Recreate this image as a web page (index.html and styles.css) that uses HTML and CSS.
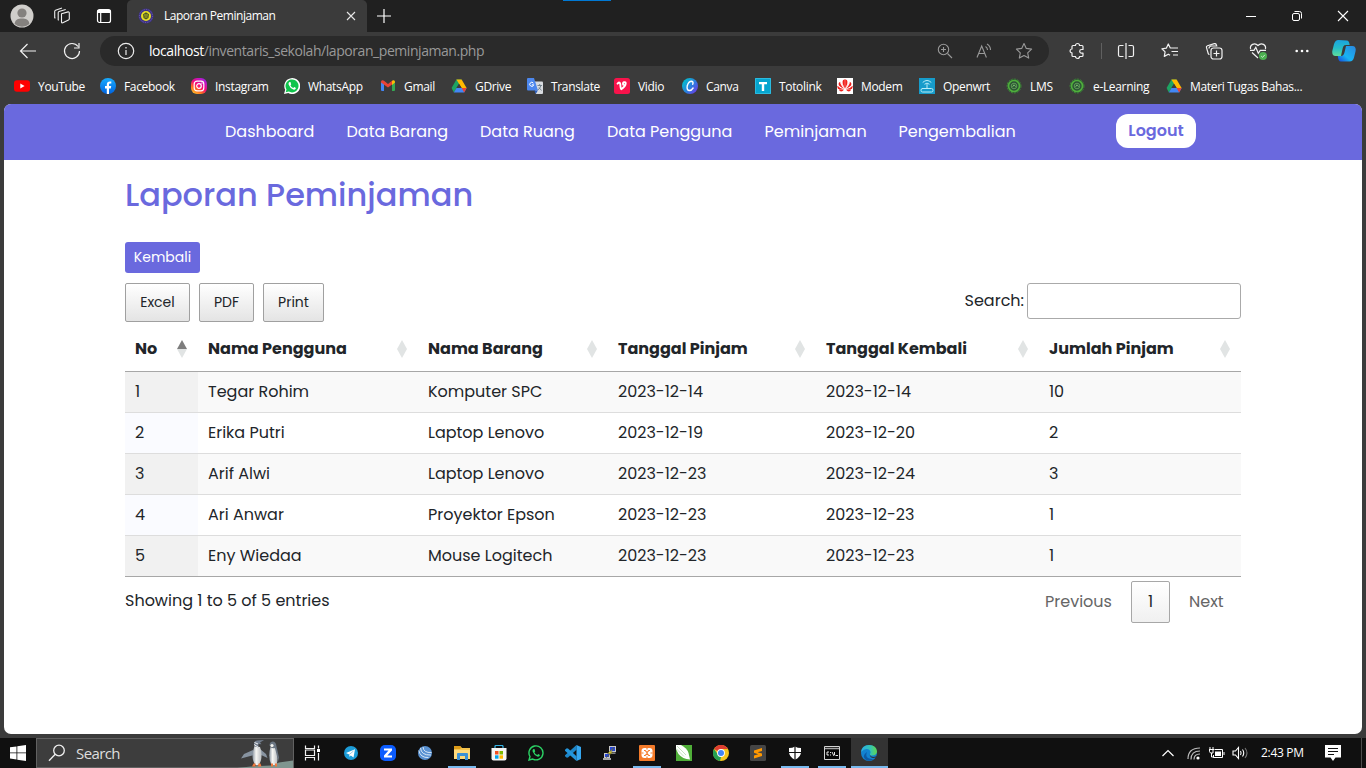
FILE: index.html
```html
<!DOCTYPE html>
<html lang="id">
<head>
<meta charset="utf-8">
<title>Laporan Peminjaman</title>
<link rel="stylesheet" href="styles.css">
</head>
<body>
<svg class="defs" width="0" height="0">
  <defs>
    <linearGradient id="fb" x1="0" y1="0" x2="0" y2="1"><stop offset="0" stop-color="#18acfe"/><stop offset="1" stop-color="#0163e0"/></linearGradient>
    <linearGradient id="ig" x1="0.1" y1="1" x2="0.8" y2="0"><stop offset="0" stop-color="#ffd02e"/><stop offset=".3" stop-color="#ff6a20"/><stop offset=".55" stop-color="#f5087c"/><stop offset="1" stop-color="#a020e8"/></linearGradient>
    <linearGradient id="cv" x1="0" y1="0.2" x2="1" y2="1"><stop offset="0" stop-color="#00c4cc"/><stop offset=".5" stop-color="#2c7ee0"/><stop offset="1" stop-color="#7d2ae8"/></linearGradient>
    <linearGradient id="cpa" x1="0" y1="0" x2="0" y2="1"><stop offset="0" stop-color="#1aa3e0"/><stop offset=".5" stop-color="#25bcc8"/><stop offset="1" stop-color="#5fdc9a"/></linearGradient>
    <linearGradient id="cpb" x1="1" y1="0" x2="0" y2="1"><stop offset="0" stop-color="#2a86dc"/><stop offset=".6" stop-color="#18b4f4"/><stop offset="1" stop-color="#1546d8"/></linearGradient>
    <linearGradient id="edge1" x1="0" y1="0" x2="1" y2="0"><stop offset="0" stop-color="#2aaee8"/><stop offset=".6" stop-color="#35c6b0"/><stop offset="1" stop-color="#62d84c"/></linearGradient>
    <linearGradient id="peng" x1="0" y1="0" x2="1" y2="0"><stop offset="0" stop-color="#8d98a4"/><stop offset=".4" stop-color="#f7f7f4"/><stop offset="1" stop-color="#b8bcc0"/></linearGradient>
    <symbol id="drive" viewBox="0 0 16 16"><path d="M5.4 1.5h5.2L5.5 10.2 2.8 14.4.6 10z" fill="#1ea362"/><path d="M5.4 1.5h5.2l5 8.6h-5z" fill="#ffba00"/><path d="M5.500 10h10.1l-2.4 4.4H2.8z" fill="#4387f5"/><path d="M10.600 10h5l-2.400 4.400z" fill="#ea4335"/><path d="M8 5.700L5.400 10h5.200z" fill="#3b3b3b"/></symbol>
    <symbol id="seal" viewBox="0 0 16 16"><circle cx="8" cy="8" r="7" fill="#2c5135" stroke="#3f8038" stroke-width="1" stroke-dasharray="2 1"/><circle cx="8" cy="8" r="5.500" fill="none" stroke="#4fae3c" stroke-width="1.700"/><circle cx="8" cy="8" r="2.800" fill="#2b5a35" stroke="#6ba860" stroke-width=".8"/><path d="M6.600 8.800L8 6.800l1.600 1.800" fill="none" stroke="#8fd07a" stroke-width=".8"/></symbol>
  </defs>
</svg>

<header class="titlebar">
  <div class="titlebar-left">
    <svg class="avatar" width="24" height="24" viewBox="0 0 24 24"><circle cx="12" cy="12" r="11.5" fill="#d0cecb"/><circle cx="12" cy="9" r="4.6" fill="#84817e"/><path d="M4.6 20c.6-4.6 3.6-5.4 7.4-5.4s6.800.8 7.400 5.400A11.500 11.500 0 0 1 4.600 20z" fill="#84817e"/></svg>
    <svg class="i-spaces" width="18" height="18" viewBox="0 0 18 18" fill="none" stroke="#ededed" stroke-width="1.100" stroke-linejoin="round"><path d="M8.500 6.800l6.600-1.900q1.200-.2 1.200 1v5.900q0 .8-.8 1.200l-5.700 2.800q-1.300.4-1.300-.9z"/><path d="M5.800 13.300l-.6-.4V5.700q0-.9.800-1.200l6.700-2M2.400 11.200l-.7-.5V4.400q0-.9.800-1.200L9 1"/></svg>
    <svg class="i-tabs" width="16" height="16" viewBox="0 0 16 16" fill="none" stroke="#fff" stroke-width="1.200"><rect x="1.500" y="1.500" width="13" height="13" rx="2"/><path d="M1.500 3.500h13" stroke-width="3"/><path d="M4.700 4v10.500"/></svg>
  </div>
  <div class="tab">
    <svg width="16" height="16" viewBox="0 0 16 16"><circle cx="8" cy="8" r="7.500" fill="#3d3385"/><circle cx="8" cy="8" r="6.500" fill="none" stroke="#7761ad" stroke-dasharray="1 1.500"/><circle cx="8" cy="8" r="5" fill="#e7df25"/><path d="M8 4.200l3 2.100-.5 3.700L8 11.500 5.500 10 5 6.300z" fill="#4c5820"/><path d="M6 7h4M6.500 9h3" stroke="#e7df25" stroke-width=".7"/></svg>
    <span class="tab-title">Laporan Peminjaman</span>
    <svg width="10" height="10" viewBox="0 0 10 10" stroke="#e8e8e8" stroke-width="1.100"><path d="M1 1l8 8M9 1L1 9"/></svg>
  </div>
  <svg class="new-tab" width="14" height="14" viewBox="0 0 14 14" stroke="#fff" stroke-width="1.200"><path d="M7 0v14M0 7h14"/></svg>
  <div class="accent"></div>
  <div class="window-buttons">
    <svg width="12" height="12" viewBox="0 0 12 12" stroke="#fff"><path d="M1 6.500h10"/></svg>
    <svg width="12" height="12" viewBox="0 0 12 12" fill="none" stroke="#fff"><rect x="1.500" y="3.500" width="7" height="7" rx="1.500"/><path d="M3.500 1.500h5q2 0 2 2v5"/></svg>
    <svg width="12" height="12" viewBox="0 0 12 12" stroke="#fff" stroke-width="1.100"><path d="M1 1l10 10M11 1L1 11"/></svg>
  </div>
</header>

<div class="toolbar">
  <div class="cell"><svg width="18" height="16" viewBox="0 0 18 16" fill="none" stroke="#f2f2f2" stroke-width="1.200"><path d="M17 8H1.500M8.500 1L1.500 8l7 7"/></svg></div>
  <div class="cell"><svg width="18" height="18" viewBox="0 0 18 18" fill="none" stroke="#f2f2f2" stroke-width="1.200"><path d="M16.500 9A7.500 7.500 0 1 1 15 4.500M16 1v5h-5"/></svg></div>
  <div class="address">
    <svg class="info" width="18" height="18" viewBox="0 0 18 18" fill="none" stroke="#ededed" stroke-width="1.200"><circle cx="9" cy="9" r="7.700"/><path d="M9 8v5M9 5v1.400"/></svg>
    <span class="url"><b>localhost</b>/inventaris_sekolah/laporan_peminjaman.php</span>
    <div class="address-icons">
      <svg width="16" height="16" viewBox="0 0 16 16" fill="none" stroke="#999" stroke-width="1.100"><circle cx="6.500" cy="6.500" r="5.200"/><path d="M10.500 10.500l4.500 4.500M4 6.500h5M6.500 4v5"/></svg>
      <svg width="18" height="16" viewBox="0 0 18 16" fill="none" stroke="#999" stroke-width="1.100"><path d="M2 14.500L6.700 3l4.700 11.500M3.700 10.500h6M10.500 3.500q2 1.200 2 3.500M12 1q3.500 2 3.500 6"/></svg>
      <svg width="18" height="18" viewBox="0 0 18 18" fill="none" stroke="#999" stroke-width="1.100" stroke-linejoin="round"><path d="M9 1.500l2.300 4.900 5.300.7-3.900 3.700 1 5.300L9 13.500l-4.700 2.600 1-5.300L1.400 7.100l5.300-.7z"/></svg>
    </div>
  </div>
  <div class="actions">
    <div class="cell ext"><svg width="18" height="18" viewBox="0 0 18 18" fill="none" stroke="#f2f2f2" stroke-width="1.200" stroke-linejoin="round"><path d="M5 3.500h2.500a2 2 0 0 1 4 0H14q1 0 1 1v3h-1.500a1.800 1.800 0 0 0 0 3.600H15v2.400q0 1-1 1h-2.500a2 2 0 0 1-4 0H5q-1 0-1-1v-2.700a1.900 1.900 0 0 1 0-3.800V4.500q0-1 1-1z"/></svg></div>
    <div class="cell split"><svg width="18" height="18" viewBox="0 0 18 18" fill="none" stroke="#f2f2f2" stroke-width="1.200"><path d="M9 1v16M6.500 3.500H3q-1.500 0-1.500 1.500v8q0 1.500 1.500 1.500h3.500M11.500 3.500H15q1.500 0 1.500 1.500v8q0 1.500-1.500 1.500h-3.500"/></svg></div>
    <div class="cell"><svg width="18" height="18" viewBox="0 0 18 18" fill="none" stroke="#f2f2f2" stroke-width="1.200" stroke-linejoin="round"><path d="M11 6H9.300L7.300 2 5.300 6.200.9 6.800l3.200 3.100-.8 4.500 4-2.200 1.800 1M11 6h6M10.500 9.500H17M12 13h5"/></svg></div>
    <div class="cell"><svg width="18" height="18" viewBox="0 0 18 18" fill="none" stroke="#f2f2f2" stroke-width="1.200"><rect x="6" y="6" width="11" height="11" rx="2.500"/><path d="M11.500 8.500v6M8.500 11.500h6M4.500 12.500q-1 0-1.300-1L1.500 5.700q-.5-1.500 1-2l6.800-2q1.500-.4 2 1l.4 1.300H6.500Q4 4.200 4 6.500"/></svg></div>
    <div class="cell"><svg width="18" height="18" viewBox="0 0 18 18" fill="none" stroke="#f2f2f2" stroke-width="1.200"><path d="M1.600 7C.5 3 5.500-.2 9 3.500 12.500-.2 17.500 3 16.400 7M1 8.300h4l1.800-3 2.500 6 2-3H17M3 10.500l6 5.500"/><circle cx="14" cy="14" r="4" fill="#4caf50" stroke="none"/><path d="M12.200 14.100l1.300 1.300 2.400-2.600" stroke="#c9edca" stroke-width="1"/></svg></div>
    <div class="cell"><svg width="14" height="4" viewBox="0 0 14 4" fill="#fff"><circle cx="1.700" cy="2" r="1.300"/><circle cx="7" cy="2" r="1.300"/><circle cx="12.300" cy="2" r="1.300"/></svg></div>
    <div class="cell copilot"><svg width="24" height="24" viewBox="0 0 24 24"><path d="M14.500 1.500c2.300 0 2.700 1.700 3.200 4.500H14c-2.500 0-3 2-3.600 4.600L9 17H3.500C.7 17-.2 14.400.4 11.500l1.500-6C2.600 3 4 1 6.500 1z" fill="url(#cpa)"/><path d="M9 22.500c-2.300 0-2.800-2-3.200-5.500H9c2 0 3-1.600 3.600-4L14 7h6.500c2.800 0 3.700 2.500 3 5.400l-1.500 6c-.7 2.600-2 4.100-4.500 4.100z" fill="url(#cpb)"/></svg></div>
  </div>
</div>

<nav class="bookmarks">
  <a><svg viewBox="0 0 16 16"><rect y="2.300" width="16" height="11.400" rx="3" fill="#f00"/><path d="M6.300 5.500v5l4.300-2.500z" fill="#fff"/></svg>YouTube</a>
  <a><svg viewBox="0 0 16 16"><circle cx="8" cy="8" r="8" fill="url(#fb)"/><path d="M6.800 16v-5.400H5V8.100h1.800V6.700c0-2.300 1.200-3.300 3-3.300l1.500.1v2.100h-1c-1 0-1.300.5-1.300 1.300v1.200h2.200l-.4 2.500H9V16z" fill="#fff"/></svg>Facebook</a>
  <a><svg viewBox="0 0 16 16"><rect width="16" height="16" rx="6" fill="url(#ig)"/><rect x="3.200" y="3.200" width="9.600" height="9.600" rx="2.800" fill="none" stroke="#fff" stroke-width="1.200"/><circle cx="8" cy="8" r="2.300" fill="none" stroke="#fff" stroke-width="1.200"/><circle cx="10.900" cy="5.100" r=".7" fill="#fff"/></svg>Instagram</a>
  <a><svg viewBox="0 0 16 16"><path d="M0 16l1.200-4.200A8 8 0 1 1 4.300 15z" fill="#fff"/><path d="M1.700 14.300l.8-2.900a6.500 6.500 0 1 1 2.300 2.200z" fill="#10c44c"/><path d="M5.500 4q-1.500.8-.8 2.800 1.200 3.300 4.600 4.700 2 .6 2.700-1.500l-1.800-1-.9 1Q7.200 9.200 6.400 7.300l.8-.8L6.500 4z" fill="#fff"/></svg>WhatsApp</a>
  <a><svg viewBox="0 0 16 16"><path d="M1 3.500l3 2.200V13H2q-1 0-1-1z" fill="#4285f4"/><path d="M15 3.500l-3 2.200V13h2q1 0 1-1z" fill="#34a853"/><path d="M1 4c0-2 2-2.200 3-1.300L8 6l4-3.300V6.500L8 9.600 1 4.500z" fill="#ea4335"/><path d="M12 2.700c1-.9 3-.7 3 1.300v.5l-3 2.400z" fill="#fbbc04"/></svg>Gmail</a>
  <a><svg><use href="#drive"/></svg>GDrive</a>
  <a><svg viewBox="0 0 16 16"><path d="M6 3.500h9q1 0 1 1V15q0 1-1 1H9z" fill="#d9dce0"/><path d="M0 1q0-1 1-1h6l4 12.500H1q-1 0-1-1z" fill="#4c87ee"/><path d="M7.300 12.500h3.500L8.800 16z" fill="#2a5dbb"/><path d="M6.400 5.200A2 2 0 1 0 6.700 6.800H4.900" fill="none" stroke="#fff"/><path d="M10.500 7.500H15M12.700 6v1.500M13.900 7.500q-.5 2.500-3 4.500M12 9.500l2.500 3" fill="none" stroke="#6b7b86" stroke-width=".9"/></svg>Translate</a>
  <a><svg viewBox="0 0 16 16"><rect width="16" height="16" rx="2.500" fill="#f8134b"/><path d="M3.500 5.700q2.500-2.500 2.800.5.200 4.500 1 5 4-2.700 4.400-5.700.1-1.700-1.700-1.300-1.500.5-.8 2.500" fill="none" stroke="#fff" stroke-width="1.900" stroke-linecap="round"/></svg>Vidio</a>
  <a><svg viewBox="0 0 16 16"><circle cx="8" cy="8" r="8" fill="url(#cv)"/><path d="M10.700 6.300q1-2.600-1-3Q6.500 3.300 5.200 8q-.7 4.500 2.300 4.500 2 0 3.600-2.500" fill="none" stroke="#fff" stroke-width="1.400" stroke-linecap="round"/></svg>Canva</a>
  <a><svg viewBox="0 0 16 16"><path d="M0 0h16v16H0z" fill="#06a5cf"/><path d="M.5.500h15v15H.5z" fill="none" stroke="#2bbbe0"/><path d="M4 4h8v2.200H9.200V13H6.800V6.200H4z" fill="#fff"/></svg>Totolink</a>
  <a><svg viewBox="0 0 16 16"><path fill="#fff" d="M0 0h16v16H0z"/><g fill="#f0201c"><path d="M7.900 10.500Q4.500 5 6 2.200q1-1 2-.7 1-.3 2 .7 1.500 2.800-1.900 8.300z"/><path d="M7.300 10.800Q3 7 3.200 3.800.8 5 2 7.500q1.500 2 5.300 3.300zM8.700 10.800Q13 7 12.800 3.800 15.200 5 14 7.500q-1.500 2-5.300 3.300z"/><path d="M7 11.300Q2.500 10.500.5 7.800q-.8 3 2.300 3.700zM9 11.300q4.500-.8 6.500-3.500.8 3-2.300 3.700zM6.900 11.700H2q.5 1.800 2.200 1.800 1.500 0 2.700-1.800zM9.100 11.700H14q-.5 1.800-2.200 1.800-1.500 0-2.700-1.800z"/></g><path d="M8 2v8M4.500 5.500l3 4.500M11.500 5.500l-3 4.500" stroke="#ffb5ae" stroke-width=".5"/></svg>Modem</a>
  <a><svg viewBox="0 0 16 16"><path d="M0 0h16v16H0z" fill="#169ccb"/><g fill="none" stroke="#b9edf8" stroke-linecap="round"><rect x="2" y="10.500" width="12" height="3.500" rx="1.500"/><path d="M8 10V6.500M5.800 6q2.200-2 4.400 0M4 4.200q4-3.700 8 0"/></g></svg>Openwrt</a>
  <a><svg><use href="#seal"/></svg>LMS</a>
  <a><svg><use href="#seal"/></svg>e-Learning</a>
  <a><svg><use href="#drive"/></svg>Materi Tugas Bahas...</a>
</nav>

<div class="frame">
<main class="page">
  <nav class="site-nav">
    <a>Dashboard</a><a>Data Barang</a><a>Data Ruang</a><a>Data Pengguna</a><a>Peminjaman</a><a>Pengembalian</a>
    <a class="logout">Logout</a>
  </nav>
  <section class="content">
    <h1>Laporan Peminjaman</h1>
    <a class="back">Kembali</a>
    <div class="controls">
      <div class="exports"><button class="b-excel">Excel</button><button class="b-pdf">PDF</button><button class="b-print">Print</button></div>
      <label><span>Search:</span><input type="search"></label>
    </div>
    <table>
      <colgroup><col class="c1"><col class="c2"><col class="c3"><col class="c4"><col class="c5"><col class="c6"></colgroup>
      <thead><tr>
        <th class="asc">No</th><th>Nama Pengguna</th><th>Nama Barang</th><th>Tanggal Pinjam</th><th>Tanggal Kembali</th><th>Jumlah Pinjam</th>
      </tr></thead>
      <tbody>
        <tr><td>1</td><td>Tegar Rohim</td><td>Komputer SPC</td><td>2023-12-14</td><td>2023-12-14</td><td>10</td></tr>
        <tr><td>2</td><td>Erika Putri</td><td>Laptop Lenovo</td><td>2023-12-19</td><td>2023-12-20</td><td>2</td></tr>
        <tr><td>3</td><td>Arif Alwi</td><td>Laptop Lenovo</td><td>2023-12-23</td><td>2023-12-24</td><td>3</td></tr>
        <tr><td>4</td><td>Ari Anwar</td><td>Proyektor Epson</td><td>2023-12-23</td><td>2023-12-23</td><td>1</td></tr>
        <tr><td>5</td><td>Eny Wiedaa</td><td>Mouse Logitech</td><td>2023-12-23</td><td>2023-12-23</td><td>1</td></tr>
      </tbody>
    </table>
    <div class="table-footer">
      <span>Showing 1 to 5 of 5 entries</span>
      <div class="pager"><a class="prev">Previous</a><a class="current">1</a><a class="next">Next</a></div>
    </div>
  </section>
</main>
</div>

<footer class="taskbar">
  <div class="start"><svg width="16" height="16" viewBox="0 0 16 16" fill="#fff"><path d="M0 2.300l6.500-.9v6.100H0zM7.300 1.300L16 0v7.500H7.300zM0 8.300h6.500v6.200L0 13.600zM7.300 8.300H16V16l-8.700-1.300z"/></svg></div>
  <div class="search">
    <svg width="18" height="18" viewBox="0 0 18 18" fill="none" stroke="#f0f0f0" stroke-width="1.300"><circle cx="11" cy="6.500" r="5.300"/><path d="M7.200 10.300L1 16.800"/></svg>
    <span>Search</span>
    <svg class="penguins" width="56" height="29" viewBox="0 0 56 29"><path d="M0 29l14-1.500 20-1 8-3 14-2v8z" fill="#7f958f"/><path d="M16 11L7 15l-3 4.500L17 16zM23 10l6 5 1.500 4L22 15z" fill="#8793a0"/><path d="M17.500 7q-3 8-1.500 14 1.500 5.500 4 5.500t4-5.500q1.500-7-1-13z" fill="url(#peng)"/><path d="M17 6q-.5-4 3-4.500L27 1l-4 2.500 1.500 1.800-3-.3v3q-2.500 1-4.500-2z" fill="#737e8e"/><path d="M17.500 3.500l3.500 1.500M17 5.500l4 2.500" stroke="#eee"/><path d="M33.500 8q-3 10 1 18h5q2.500-8-1-17z" fill="url(#peng)"/><path d="M32.500 6.500q0-3.500 3-4 3.500 0 4 5l2.500 11-.8 3.500-3.200-13q-3.500 1-5.500-2.500z" fill="#6b7683"/><circle cx="35" cy="6.500" r="1.600" fill="#f5f5f0"/><path d="M15 27.500l1.500-3h2v3zM21 27.500l.5-3h2l1 3zM34 27.500v-3h2v3zM38 27.500v-3h2v3z" fill="#f1783c"/></svg>
  </div>
  <div class="task-view"><svg width="16" height="16" viewBox="0 0 16 16" fill="none" stroke="#f2f2f2" stroke-width="1.200"><path d="M1.500.5v3h9v-3M1.500 15.500v-3h9v3M1.500 5h9v5.500h-9zM14.500.5v3M14.500 8v7.500"/><path d="M13 4h3v3h-3z" fill="#fff" stroke="none"/></svg></div>
  <div class="apps">
    <div><svg viewBox="0 0 16 16"><circle cx="8" cy="8" r="7" fill="#1c9cd8"/><path d="M3 8l9-3.700-1.500 8.200-2.700-2-1.300 1.300-.3-2.200z" fill="#fff"/><path d="M6.200 9.600L10.500 6" stroke="#9ccbe3"/></svg></div>
    <div><svg viewBox="0 0 16 16"><rect width="16" height="16" rx="5" fill="#0b5cff"/><path d="M4 3.500h8v2L7.300 10.500H12v2H4v-2L8.500 5.500H4z" fill="#fff"/></svg></div>
    <div><svg viewBox="0 0 16 16"><circle cx="8" cy="8" r="7" fill="#5a92d2"/><path d="M3.500 2.800q.5 7.700 10.500 7.200M6 2q.5 6 8.500 5.500M1.800 5.500q1.700 7.500 9.700 7" fill="none" stroke="#d9e9f7" stroke-width="1"/></svg></div>
    <div class="open"><svg viewBox="0 0 16 16"><path d="M0 1h6l2 2h8v11H0z" fill="#f5c44d"/><path d="M0 1h6l1.500 1.500L6 4H0z" fill="#dc9b18"/><path d="M0 5h16v9H0z" fill="#ffda7b"/><path d="M3 15V9q0-1 1-1h9q1 0 1 1v6h-3v-4H6v4z" fill="#3c91d6"/></svg></div>
    <div><svg viewBox="0 0 16 16"><path d="M4 4V1.500q0-1 1-1h6q1 0 1 1V4" fill="none" stroke="#35b4e5" stroke-width="1.200"/><path d="M.5 3h15v10.500q0 2-2 2h-11q-2 0-2-2z" fill="#f5f5f5"/><path d="M4 6h3.500v3.500H4z" fill="#f25022"/><path d="M8.500 6H12v3.500H8.500z" fill="#7fba00"/><path d="M4 10.300h3.500v3.400H4z" fill="#00a4ef"/><path d="M8.500 10.300H12v3.400H8.500z" fill="#ffb900"/></svg></div>
    <div><svg viewBox="0 0 16 16"><path d="M1 15l1-3.500a7 7 0 1 1 2.800 2.600z" fill="none" stroke="#2bd365" stroke-width="1.400"/><path d="M5.500 4q-1.500.8-.8 2.800 1.200 3.300 4.600 4.700 2 .6 2.700-1.500l-1.800-1-.9 1Q7.200 9.200 6.400 7.300l.8-.8L6.500 4z" fill="#2bd365"/></svg></div>
    <div><svg viewBox="0 0 16 16"><path d="M11.500 0v4.700L3 12.500l-1.200.2L0 11.200v-1z" fill="#1d86c8"/><path d="M11.500 16v-4.700L3 3.500l-1.200-.2L0 4.800v1z" fill="#2496dc"/><path d="M11.500 0L16 2v12l-4.500 2z" fill="#35a7f0"/></svg></div>
    <div><svg viewBox="0 0 16 16"><path d="M7 1h7v6H7zM2 8h6v5H2z" fill="#c9c9c9"/><path d="M8 2h5v4H8zM3 9h4v3H3z" fill="#2747d5"/><path d="M1 13h8v2H1zM7.500 7.500h6v1.300h-6z" fill="#a7a7a7"/><path d="M12 2.500L5.500 8.500h3L4 12.500l7-5.300H8.500z" fill="#ffef22" stroke="#443" stroke-width=".5"/></svg></div>
    <div class="open"><svg viewBox="0 0 16 16"><rect width="16" height="16" rx="1" fill="#f47b2a"/><rect x="2.500" y="3" width="11" height="10" rx="3" fill="#fff"/><path d="M5 5.500h1.200L8 7.600l1.800-2.100H11M5 10.500h1.200L8 8.400l1.800 2.100H11M8 3v1.500M8 11.500V13M2.500 8h2M11.500 8h2" fill="none" stroke="#f47b2a" stroke-width="1.100"/></svg></div>
    <div><svg viewBox="0 0 16 16"><path d="M0 0h16v16H0z" fill="#4fae38"/><path d="M0 0h5q6 3 7.500 8l1.500 6.500Q6.500 14 2.500 9L0 4z" fill="#fff"/><path d="M1 1l9 9M0 3.500l8 8" stroke="#b5dcae" stroke-width=".8"/></svg></div>
    <div><svg viewBox="0 0 16 16"><circle cx="8" cy="8" r="8" fill="#f5c51b"/><path d="M8 8L1 4A8 8 0 0 1 15 4H8z" fill="#df3e31"/><path d="M1 4l5 7 2 1-1 4A8 8 0 0 1 1 4z" fill="#25a052"/><circle cx="8" cy="8" r="3.900" fill="#fff"/><circle cx="8" cy="8" r="3" fill="#4285f4"/></svg></div>
    <div><svg viewBox="0 0 16 16"><rect width="16" height="16" rx="1.500" fill="#454545"/><path d="M12 3v3L7.500 7.300 12 8.600V11l-8 2.600v-3L8.200 9.200 4 7.800V5.500z" fill="#ff9800"/></svg></div>
    <div class="open"><svg viewBox="0 0 16 16"><path d="M8 1.500q2.500 1.500 6 1.500v4q0 5-6 7.800Q2 12 2 7V3q3.500 0 6-1.500z" fill="#fff"/><path d="M8 1v14M2 7.500h12" stroke="#111" stroke-width="1.200"/></svg></div>
    <div class="open"><svg viewBox="0 0 16 16"><path d="M.5 1.500h15v13H.5z" fill="#070707" stroke="#d4d4d4"/><path d="M1 3.500h14" stroke="#a4a4a4" stroke-width="1.500"/><path d="M5 7H3v3h2M6.500 7v1M6.500 9.500v1M8 7l2 4M10.500 7v3M11.500 10.500h2.500" fill="none" stroke="#fff" stroke-width=".9"/></svg></div>
    <div class="open active"><svg viewBox="0 0 16 16"><circle cx="8" cy="8" r="8" fill="#1282d0"/><path d="M0 7Q1 0 8.200 0 15.500.3 16 6.500q-.3 4-5 4-2.500 0-2-1.500 1.500-2-.5-4Q4.500 2.500 0 7z" fill="url(#edge1)"/><path d="M6 7q-3 7 6 7.200l2.500-1.400Q10 17 5 15 0 11 6 7z" fill="#0c59a4"/><path d="M8.700 9.500q.8 3.600 7 1.800l-.8 1.200q-5.800 1.500-6.200-3z" fill="#333"/></svg></div>
  </div>
  <div class="tray">
    <svg width="12" height="8" viewBox="0 0 12 8" fill="none" stroke="#fff" stroke-width="1.200"><path d="M.5 7L6 1.500 11.500 7"/></svg>
    <svg width="14" height="14" viewBox="0 0 14 14" fill="none" stroke="#bcbcbc" stroke-width="1.200"><path d="M1 13Q1 2 13 2M4 13.500Q4 5 13 5M7 13.500Q7 8 13 8"/><circle cx="11" cy="12" r="1.600" fill="#fff" stroke="none"/></svg>
    <svg width="17" height="14" viewBox="0 0 17 14" fill="none" stroke="#fff"><path d="M6.500 3.500h8v8h-9V9M16 6v3M1 3.500h5M2 1v2M5 1v2M1.500 3.500v2l1 1.500H5V4M3.500 7v4H6"/><path d="M7 5.500h6v4.500H7z" fill="#fff" stroke="none"/></svg>
    <svg width="17" height="14" viewBox="0 0 17 14" fill="none" stroke="#fff" stroke-width="1.100"><path d="M1 5h2.500l3-3.500v11L3.500 9H1z"/><path d="M8.500 5q1.200 2 0 4M10.500 3.500q2.500 3.500 0 7"/><path d="M13 2q4 5 0 10" stroke="#777"/></svg>
    <time>2:43 PM</time>
    <svg width="16" height="16" viewBox="0 0 16 16"><path d="M0 0h16v12.500h-5.500L8 16l-2.500-3.500H0z" fill="#fff"/><path d="M3 3.500h10M3 6.500h10M3 9.500h6" stroke="#111"/></svg>
  </div>
</footer>
</body>
</html>
```

FILE: styles.css
```css
* { box-sizing: border-box; }
body { margin: 0; width: 1366px; height: 768px; overflow: hidden; display: flex; flex-direction: column; background: #3b3b3b; font-family: "Open Sans", sans-serif; }
.defs { position: absolute; }
svg { display: block; flex: none; }

/* browser chrome */
.titlebar { height: 32px; flex: none; background: #202020; display: flex; align-items: center; }
.titlebar-left { width: 127px; display: flex; align-items: center; padding-left: 10px; }
.i-spaces { margin-left: 19px; }
.i-tabs { margin-left: 25px; }
.tab { width: 240px; height: 32px; background: #3b3b3b; border-radius: 5px 5px 0 0; display: flex; align-items: center; padding: 0 11px; }
.tab-title { flex: 1; margin-left: 10px; color: #fff; font-size: 12px; line-height: 16px; padding-bottom: 1px; letter-spacing: -.47px; }
.new-tab { margin-left: 10px; }
.accent { align-self: flex-start; width: 48px; height: 1px; margin-left: 172px; background: #0078d4; }
.window-buttons { margin-left: auto; padding-right: 17px; display: flex; gap: 34px; }
.toolbar { height: 38px; flex: none; display: flex; align-items: center; padding-left: 6px; }
.cell { width: 44px; height: 38px; display: flex; align-items: center; justify-content: center; }
.address { margin-left: 6px; width: 949px; height: 30px; border-radius: 15px; background: #2a2a2a; display: flex; align-items: center; padding: 0 16px 0 17px; }
.url { flex: 1; margin-left: 14px; color: #999; font-size: 14px; line-height: 30px; letter-spacing: -.44px; }
.url b { color: #fff; font-weight: 400; }
.address-icons { display: flex; gap: 22px; align-items: center; }
.actions { display: flex; margin-left: 6px; }
.split { width: 49px; justify-content: flex-start; padding-left: 2px; }
.split::before { content: ""; width: 1px; height: 16px; background: #606060; margin-right: 15px; }
.copilot { width: 40px; }
.bookmarks { height: 34px; flex: none; padding: 0 0 2px 14px; display: grid; grid-template-columns: 86px 91px 93px 96px 71px 76px 87px 68px 73px 82px 82px 87px 63px 97px 1fr; align-items: center; color: #fff; font-size: 12px; letter-spacing: -.33px; }
.bookmarks a { display: flex; align-items: center; gap: 8px; white-space: nowrap; }
.bookmarks svg { width: 16px; height: 16px; }

/* page */
.frame { height: 634px; flex: none; padding: 0 4px 4px; }
.page { height: 630px; background: #fff; border-radius: 7px; overflow: hidden; color: #212529; font: 16px/24px Poppins, Inter, sans-serif; }
.site-nav { height: 56px; background: #6a69de; color: #fff; display: grid; grid-template-columns: 121.5px 133.5px 127px 157.5px 134px 217.5px 80px; padding: 0 0 1px 221px; align-items: center; }
.logout { height: 34px; margin-bottom: 1px; border-radius: 12px; background: #fff; color: #6a69de; font-weight: 600; line-height: 33px; text-align: center; }
.content { width: 1116px; margin-left: 121px; padding-top: 16px; }
h1 { margin: 0; height: 66px; color: #6a69de; font-weight: 500; font-size: 32px; line-height: 38px; }
.back { display: block; width: 75px; height: 31px; border-radius: 3px; background: #6a69de; color: #fff; font-size: 14px; line-height: 31px; text-align: center; }
.controls { display: flex; justify-content: space-between; align-items: flex-start; height: 53px; padding-top: 10px; }
.exports { display: flex; gap: 9px; }
button { height: 39px; padding: 0; border: 1px solid #a0a0a0; border-radius: 2px; background: linear-gradient(#fff, #e4e4e4); color: #212529; font: 14px Poppins, Inter, sans-serif; }
.b-excel { width: 65px; }
.b-pdf { width: 55px; }
.b-print { width: 61px; }
label { display: flex; align-items: center; gap: 3px; }
label span { padding-bottom: 1px; }
input { width: 214px; height: 36px; border: 1px solid #aaa; border-radius: 3px; background: #fff; }
table { table-layout: fixed; width: 1116px; border-collapse: separate; border-spacing: 0; border-bottom: 1px solid #a7a7a7; }
.c1 { width: 73px; } .c2 { width: 220px; } .c3 { width: 190px; } .c4 { width: 208px; } .c5 { width: 223px; } .c6 { width: 202px; }
th { height: 46px; padding: 0 10px; text-align: left; font-weight: 700; border-bottom: 1px solid #a7a7a7; position: relative; }
th::before, th::after { content: ""; position: absolute; right: 11px; border: solid transparent; border-width: 0 5px; }
th::before { top: 14px; border-bottom: 9px solid #e1e4e4; }
th::after { top: 23px; border-top: 9px solid #e1e4e4; }
th.asc::before { border-bottom-color: #7d7d7d; }
td { height: 41px; padding: 0 10px; border-top: 1px solid #ddd; }
tbody tr:first-child td { height: 40px; border-top: 0; }
tbody tr:nth-child(odd) { background: #f9f9f9; }
tbody td:first-child { background: #fafbff; }
tbody tr:nth-child(odd) td:first-child { background: #f1f1f1; }
.table-footer { display: flex; justify-content: space-between; padding-top: 4px; }
.table-footer > span { line-height: 40px; }
.pager { display: flex; align-items: center; color: #666; }
.prev { width: 86px; }
.current { width: 39px; height: 42px; border: 1px solid #a7a7a7; border-radius: 2px; background: linear-gradient(#fff, #f0f0f0); color: #212529; line-height: 40px; text-align: center; }
.next { width: 71px; padding-left: 19px; }

/* taskbar */
.taskbar { height: 30px; flex: none; background: #101010; display: flex; color: #fff; }
.start { width: 36px; display: flex; align-items: center; justify-content: center; }
.search { width: 258px; height: 30px; background: #3d3d3d; border: 1px solid #616161; display: flex; align-items: center; padding-left: 11px; }
.search span { margin-left: 10px; flex: 1; font-size: 15px; line-height: 28px; letter-spacing: -.6px; color: #ddd; }
.task-view { width: 38.5px; padding-right: 3px; display: flex; align-items: center; justify-content: center; }
.apps { display: flex; }
.apps div { width: 37px; height: 30px; display: flex; align-items: center; justify-content: center; background: linear-gradient(#78b9ee, #78b9ee) bottom / 0 2px no-repeat; }
.apps .open { background-size: 28px 2px; }
.apps .active { background-color: #333; background-size: 100% 2px; }
.apps svg { width: 16px; height: 16px; }
.tray { margin-left: auto; display: flex; align-items: center; width: 200px; border-right: 1px solid #4c4c4c; margin-right: 4px; }
.tray svg + svg { margin-left: 7px; }
.tray svg:nth-child(2) { margin-left: 13px; }
.tray time { width: 64px; margin-left: 12px; font-size: 12px; line-height: 28px; letter-spacing: -.3px; white-space: nowrap; }
```
